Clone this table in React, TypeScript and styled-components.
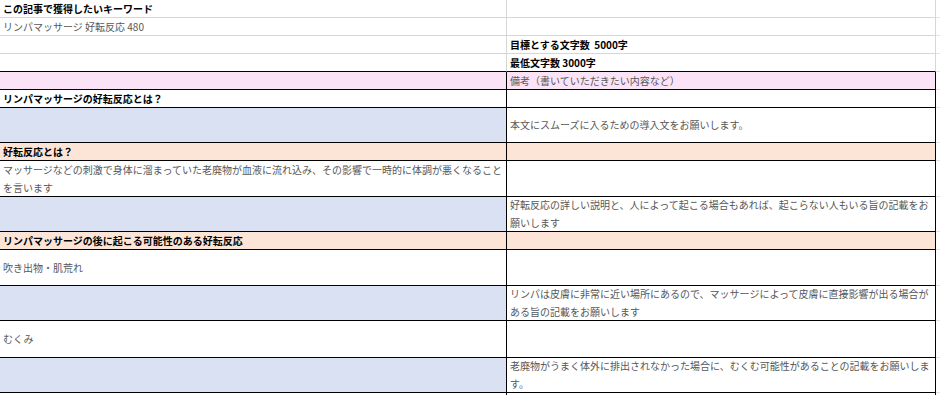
import React from 'react';
import styled, { createGlobalStyle } from 'styled-components';

const GlobalStyle = createGlobalStyle`
  html, body {
    margin: 0;
    padding: 0;
    background: #ffffff;
  }
  body {
    font-family: "Noto Sans CJK JP", "Noto Sans", sans-serif;
    font-size: 10px;
    color: #000;
    overflow: hidden;
  }
`;

type Fill = 'white' | 'pink' | 'blue' | 'peach';

const fills: Record<Fill, string> = {
  white: '#ffffff',
  pink: '#fbe3f7',
  blue: '#d9e1f2',
  peach: '#fce4d6',
};

const GRID = '#d6d6d6';
const INK = '#000000';

const Sheet = styled.div`
  display: flex;
  flex-direction: column;
  width: 940px;
`;

const Row = styled.div<{ $h: number }>`
  display: grid;
  grid-template-columns: 507px 429px 1fr;
  height: ${(p) => p.$h}px;
`;

const Cell = styled.div<{ $fill: Fill; $bottom: string; $side: string }>`
  box-sizing: border-box;
  display: flex;
  align-items: center;
  padding: 0 2px 0 3px;
  background: ${(p) => fills[p.$fill]};
  border-bottom: 1px solid ${(p) => p.$bottom};
  border-right: 1px solid ${(p) => p.$side};
  overflow: hidden;
`;

const Stub = styled.div`
  box-sizing: border-box;
  border-bottom: 1px solid #e2e2e2;
  background: #ffffff;
`;

const Text = styled.span<{ $bold?: boolean }>`
  display: block;
  width: 100%;
  line-height: 18px;
  font-size: 10px;
  white-space: pre-wrap;
  line-break: strict;
  font-weight: ${(p) => (p.$bold ? 700 : 400)};
  color: ${(p) => (p.$bold ? '#000000' : '#575757')};
`;

type Content = { text: string; bold?: boolean };

type SheetRow = {
  h: number;
  bottom: string;
  side: string;
  leftFill?: Fill;
  rightFill?: Fill;
  left?: Content;
  right?: Content;
};

const rows: SheetRow[] = [
  { h: 18, bottom: GRID, side: GRID, left: { text: 'この記事で獲得したいキーワード', bold: true } },
  { h: 18, bottom: GRID, side: GRID, left: { text: 'リンパマッサージ 好転反応 480' } },
  { h: 18, bottom: GRID, side: GRID, right: { text: '目標とする文字数  5000字', bold: true } },
  { h: 18, bottom: INK, side: GRID, right: { text: '最低文字数 3000字', bold: true } },
  { h: 18, bottom: INK, side: INK, leftFill: 'pink', rightFill: 'pink', right: { text: '備考（書いていただきたい内容など）' } },
  { h: 18, bottom: INK, side: INK, left: { text: 'リンパマッサージの好転反応とは？', bold: true } },
  { h: 35, bottom: INK, side: INK, leftFill: 'blue', right: { text: '本文にスムーズに入るための導入文をお願いします。' } },
  { h: 18, bottom: INK, side: INK, leftFill: 'peach', rightFill: 'peach', left: { text: '好転反応とは？', bold: true } },
  {
    h: 36,
    bottom: INK,
    side: INK,
    left: { text: 'マッサージなどの刺激で身体に溜まっていた老廃物が血液に流れ込み、その影響で一時的に体調が悪くなることを言います' },
  },
  {
    h: 35,
    bottom: INK,
    side: INK,
    leftFill: 'blue',
    right: { text: '好転反応の詳しい説明と、人によって起こる場合もあれば、起こらない人もいる旨の記載をお願いします' },
  },
  { h: 18, bottom: INK, side: INK, leftFill: 'peach', rightFill: 'peach', left: { text: 'リンパマッサージの後に起こる可能性のある好転反応', bold: true } },
  { h: 36, bottom: INK, side: INK, left: { text: '吹き出物・肌荒れ' } },
  {
    h: 35,
    bottom: INK,
    side: INK,
    leftFill: 'blue',
    right: { text: 'リンパは皮膚に非常に近い場所にあるので、マッサージによって皮膚に直接影響が出る場合がある旨の記載をお願いします' },
  },
  { h: 37, bottom: INK, side: INK, left: { text: 'むくみ' } },
  {
    h: 35,
    bottom: INK,
    side: INK,
    leftFill: 'blue',
    right: { text: '老廃物がうまく体外に排出されなかった場合に、むくむ可能性があることの記載をお願いします。' },
  },
  { h: 18, bottom: INK, side: INK },
];

const CellText = ({ content }: { content?: Content }) =>
  content ? <Text $bold={content.bold}>{content.text}</Text> : null;

export default function App() {
  return (
    <>
      <GlobalStyle />
      <Sheet>
        {rows.map((row, i) => (
          <Row key={i} $h={row.h}>
            <Cell $fill={row.leftFill ?? 'white'} $bottom={row.bottom} $side={row.side}>
              <CellText content={row.left} />
            </Cell>
            <Cell $fill={row.rightFill ?? 'white'} $bottom={row.bottom} $side={row.side}>
              <CellText content={row.right} />
            </Cell>
            <Stub />
          </Row>
        ))}
      </Sheet>
    </>
  );
}
